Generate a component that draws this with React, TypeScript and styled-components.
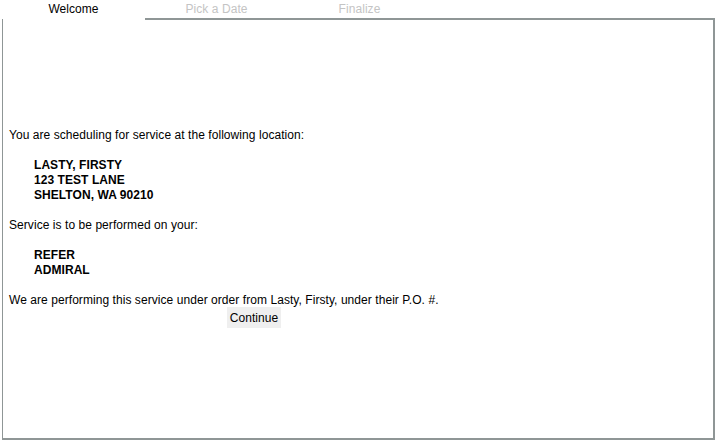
import React from "react";
import styled, { createGlobalStyle } from "styled-components";

const Global = createGlobalStyle`
  html, body { margin: 0; padding: 0; background: #fff; }
  body { font-family: "Liberation Sans", Arial, sans-serif; font-size: 12px; color: #000; letter-spacing: 0.06px; }
`;

const Page = styled.div`
  width: 717px;
  height: 441px;
  box-sizing: border-box;
  padding: 0 2px 1px 2px;
  display: flex;
  flex-direction: column;
`;

const TabBar = styled.div`
  display: flex;
  height: 20px;
`;

const Tab = styled.div<{ $active?: boolean }>`
  width: 143px;
  height: 20px;
  box-sizing: border-box;
  text-align: center;
  line-height: 19px;
  color: ${(p) => (p.$active ? "#000" : "#c4c4c4")};
  border-bottom: ${(p) => (p.$active ? "none" : "2px solid #8f9696")};
`;

const TabFill = styled.div`
  flex: 1;
  border-bottom: 2px solid #8f9696;
`;

const Panel = styled.div`
  flex: 1;
  margin-top: -1px;
  border-left: 1px solid #8f9696;
  border-right: 2px solid #8f9696;
  border-bottom: 2px solid #8f9696;
  padding: 109px 0 0 6px;
  line-height: 15px;
`;

const Para = styled.p`
  margin: 0 0 15px 0;
  &:last-of-type { margin-bottom: -1px; }
`;

const Block = styled.div`
  margin: 0 0 15px 25px;
  font-weight: bold;
`;

const Button = styled.button`
  display: block;
  margin-left: 218px;
  height: 21px;
  width: 54px;
  border: none;
  background: #efefef;
  font-family: "Liberation Sans", Arial, sans-serif;
  font-size: 12px;
  letter-spacing: 0.06px;
  padding: 0;
  color: #000;
`;

export default function App() {
  return (
    <>
      <Global />
      <Page>
        <TabBar>
          <Tab $active>Welcome</Tab>
          <Tab>Pick a Date</Tab>
          <Tab>Finalize</Tab>
          <TabFill />
        </TabBar>
        <Panel>
          <Para>You are scheduling for service at the following location:</Para>
          <Block>
            LASTY, FIRSTY
            <br />
            123 TEST LANE
            <br />
            SHELTON, WA 90210
          </Block>
          <Para>Service is to be performed on your:</Para>
          <Block>
            REFER
            <br />
            ADMIRAL
          </Block>
          <Para>We are performing this service under order from Lasty, Firsty, under their P.O. #.</Para>
          <Button>Continue</Button>
        </Panel>
      </Page>
    </>
  );
}
